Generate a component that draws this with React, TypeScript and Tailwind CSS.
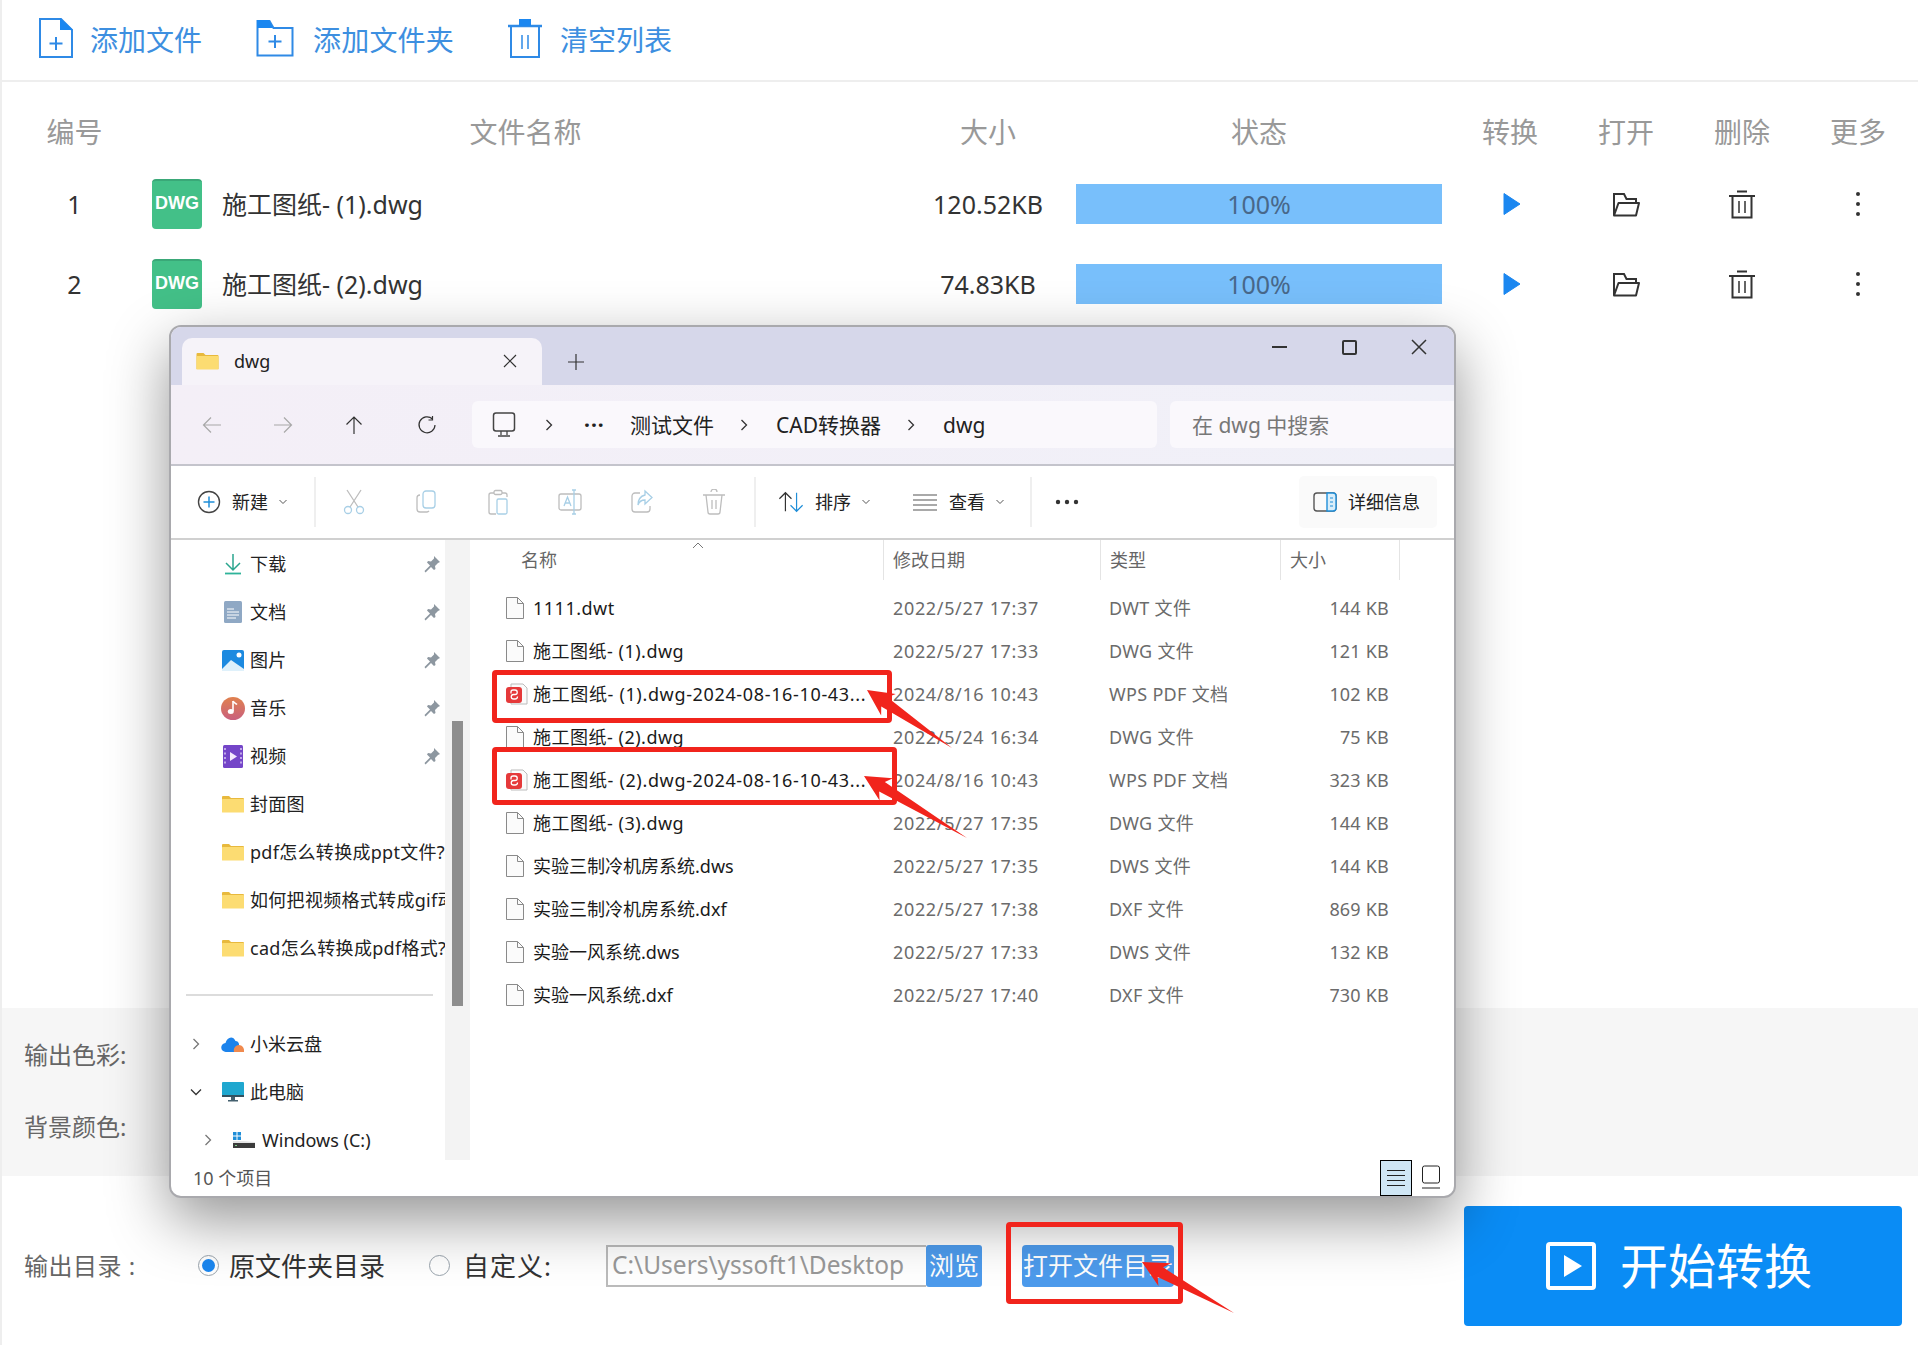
import React from "react";

const FONT = "font-['Noto_Sans','Noto_Sans_CJK_SC',sans-serif]";

function AddFileIcon() {
  return (
    <svg width="36" height="42" viewBox="0 0 36 42" fill="none" className="shrink-0 mb-[4px]">
      <path d="M2 2h21l11 11v27H2z" stroke="#2f8ae6" strokeWidth="2" />
      <path d="M22 1l13 12H22z" fill="#1b87f0" />
      <path d="M18 20v13M11.5 26.5h13" stroke="#2f8ae6" strokeWidth="2" />
    </svg>
  );
}
function AddFolderIcon() {
  return (
    <svg width="38" height="38" viewBox="0 0 38 38" fill="none" className="shrink-0 mb-[4px]">
      <path d="M1.5 2h12l4 7h19v27.5h-35z" stroke="#2f8ae6" strokeWidth="2" />
      <path d="M1 1h12l4 8H1z" fill="#1b87f0" />
      <path d="M19 16v13M12.5 22.500h13" stroke="#2f8ae6" strokeWidth="2" />
    </svg>
  );
}
function ClearIcon() {
  return (
    <svg width="36" height="40" viewBox="0 0 36 40" fill="none" className="shrink-0 mb-[4px]">
      <path d="M1 8h34" stroke="#2f8ae6" strokeWidth="2.500" />
      <rect x="12" y="1" width="12" height="7" fill="#1b87f0" />
      <path d="M4 9v30h28V9" stroke="#2f8ae6" strokeWidth="2" />
      <path d="M15 17v14M21 17v14" stroke="#2f8ae6" strokeWidth="1.500" />
    </svg>
  );
}
function Play() {
  return (
    <svg width="18" height="24" viewBox="0 0 18 24" className="ml-[4px]">
      <path d="M1 1.500l16 10.500L1 22.500z" fill="#1b87f0" stroke="#1b87f0" strokeLinejoin="round" />
    </svg>
  );
}
function OpenFolder() {
  return (
    <svg width="28" height="25" viewBox="0 0 28 25" fill="none">
      <path d="M2 23V2h10l2.500 5H24v4" stroke="#333" strokeWidth="2" />
      <path d="M6.500 11H27l-3 12.500H2z" stroke="#333" strokeWidth="2" strokeLinejoin="round" />
    </svg>
  );
}
function Trash() {
  return (
    <svg width="28" height="29" viewBox="0 0 28 29" fill="none">
      <path d="M1 6h26M9 1.500h10" stroke="#333" strokeWidth="2" />
      <path d="M4.500 6.500V27.500h19V6.500" stroke="#333" strokeWidth="2" />
      <path d="M11 11v12M17 11v12" stroke="#333" strokeWidth="1.500" />
    </svg>
  );
}
function Dots() {
  return (
    <svg width="6" height="26" viewBox="0 0 6 26">
      <circle cx="3" cy="3" r="2" fill="#333" />
      <circle cx="3" cy="13" r="2" fill="#333" />
      <circle cx="3" cy="23" r="2" fill="#333" />
    </svg>
  );
}
function DwgBadge() {
  return (
    <div className="w-[50px] h-[50px] rounded-[4px] bg-[#43c088] border-t-2 border-[#3aa878] pb-[4px] flex items-center justify-center text-white text-[18px] font-semibold font-['Liberation_Sans',sans-serif]">
      DWG
    </div>
  );
}
function Folder({ w = 22, h = 18 }: { w?: number; h?: number }) {
  return (
    <svg width={w} height={h} viewBox="0 0 22 18" className="shrink-0">
      <path d="M0 2a1 1 0 011-1h6l2 2h12a1 1 0 011 1v13H0z" fill="#e8b93d" />
      <rect x="0" y="4" width="22" height="13.500" rx="0.500" fill="#fcdc72" />
    </svg>
  );
}
function FileIcon() {
  return (
    <svg width="18" height="22" viewBox="0 0 18 22" fill="none" className="shrink-0">
      <path d="M.5.500h11l6 6v15H.5z" fill="#fbfbfb" stroke="#8a8a8a" />
      <path d="M11.500.500v6h6" stroke="#8a8a8a" />
    </svg>
  );
}
function PdfIcon() {
  return (
    <svg width="22" height="22" viewBox="0 0 22 22" fill="none" className="shrink-0">
      <path d="M5 1h12l4 4v16H5z" fill="#fbfbfb" stroke="#bbb" />
      <rect x="0" y="4" width="16" height="16" rx="3" fill="#e5393a" />
      <path d="M5 10.500V9a2 2 0 012-2h2a2 2 0 010 4.500H7.500a2 2 0 000 4.500H9a2.500 2.500 0 002.500-2.500" stroke="#fff" strokeWidth="1.300" />
    </svg>
  );
}
function Chevron({ c = "#555" }: { c?: string }) {
  return (
    <svg width="10" height="6" viewBox="0 0 10 6" fill="none" className="shrink-0">
      <path d="M1.500 1l3.500 3.500L8.500 1" stroke={c} />
    </svg>
  );
}
function RightChevron({ c = "#333" }: { c?: string }) {
  return (
    <svg width="10" height="14" viewBox="0 0 10 14" fill="none" className="shrink-0">
      <path d="M2.500 2l5 5-5 5" stroke={c} strokeWidth="1.300" />
    </svg>
  );
}
function Pin() {
  return (
    <svg width="18" height="18" viewBox="0 0 18 18" className="shrink-0">
      <path d="M11 1l6 6-2 1-3 3 .5 3-1.500 1-3-3-5.500 5.500L1.500 16 7 10.500l-3-3 1-1.500 3 .5 3-3z" fill="#8d97a0" />
    </svg>
  );
}
function NavIcon({ name, c }: { name: string; c: string }) {
  const d: Record<string, string> = {
    back: "M19 10H2M9 2.500L1.500 10 9 17.500",
    fwd: "M1 10h17M11 2.500L18.500 10 11 17.500",
    up: "M10 19V2M2.500 9.500L10 2l7.500 7.500",
    refresh: "M15.500 4A8 8 0 1018 10M15.500 1v4h-4",
  };
  return (
    <svg width="20" height="20" viewBox="0 0 20 20" fill="none">
      <path d={d[name]} stroke={c} strokeWidth="1.200" />
    </svg>
  );
}
function CmdIcon({ name }: { name: string }) {
  const grey = "#bdbdbd";
  const blue = "#a8cfe6";
  return (
    <svg width="24" height="26" viewBox="0 0 24 26" fill="none" className="shrink-0">
      {name === "cut" && (
        <>
          <path d="M5 1l11 17M19 1L8 18" stroke={grey} strokeWidth="1.300" />
          <circle cx="6" cy="21" r="3.500" stroke={blue} strokeWidth="1.300" />
          <circle cx="18" cy="21" r="3.500" stroke={blue} strokeWidth="1.300" />
        </>
      )}
      {name === "copy" && (
        <>
          <rect x="9" y="2" width="12" height="17" rx="3" stroke={blue} strokeWidth="1.300" />
          <path d="M6 6a3 3 0 00-3 3v11a3 3 0 003 3h7a3 3 0 002-1" stroke={grey} strokeWidth="1.300" />
        </>
      )}
      {name === "paste" && (
        <>
          <path d="M8 4H5a2 2 0 00-2 2v17a2 2 0 002 2h5M16 4h3a2 2 0 012 2v2" stroke={grey} strokeWidth="1.300" />
          <rect x="8" y="1.500" width="8" height="4" rx="1.500" stroke={grey} strokeWidth="1.300" />
          <rect x="11" y="10" width="10" height="15" rx="1.500" stroke={blue} strokeWidth="1.300" />
        </>
      )}
      {name === "rename" && (
        <>
          <rect x="1" y="5" width="22" height="16" rx="2" stroke={grey} strokeWidth="1.300" />
          <path d="M6 17l3.500-9L13 17M7.500 14h4" stroke={blue} strokeWidth="1.300" />
          <path d="M14 1h4M14 25h4M16 1v24" stroke={blue} strokeWidth="1.300" />
        </>
      )}
      {name === "share" && (
        <>
          <path d="M10 4H5a3 3 0 00-3 3v13a3 3 0 003 3h12a3 3 0 003-3v-3" stroke={grey} strokeWidth="1.300" />
          <path d="M15 2l7 6.500-7 6.500v-4c-4 0-6 2-7 5 0-6 3-9 7-10z" stroke={blue} strokeWidth="1.300" />
        </>
      )}
      {name === "trash" && (
        <>
          <path d="M1 6h22M9 3a3 3 0 016 0" stroke={grey} strokeWidth="1.300" />
          <path d="M4 6l2 17a2 2 0 002 2h8a2 2 0 002-2l2-17M10 11v9M14 11v9" stroke={grey} strokeWidth="1.300" />
        </>
      )}
    </svg>
  );
}
function SideIcon({ name }: { name: string }) {
  if (name === "folder") return <Folder />;
  const box = "shrink-0";
  if (name === "download")
    return (
      <svg width="20" height="22" viewBox="0 0 20 22" fill="none" className={box}>
        <path d="M10 1v15M3 10l7 7 7-7" stroke="#2aa58e" strokeWidth="1.500" />
        <path d="M2 20.500h16" stroke="#2fb39a" strokeWidth="1.800" />
      </svg>
    );
  if (name === "doc")
    return (
      <svg width="18" height="22" viewBox="0 0 18 22" className={box}>
        <rect width="18" height="22" rx="1.500" fill="#8fa8c4" />
        <path d="M3 8h7M3 11h12M3 14h12M3 17h9" stroke="#fff" strokeWidth="1" />
      </svg>
    );
  if (name === "pic")
    return (
      <svg width="22" height="21" viewBox="0 0 22 21" className={box}>
        <rect width="22" height="21" rx="2" fill="#1c8ae0" />
        <circle cx="17" cy="5" r="2.500" fill="#fff" />
        <path d="M0 19l9-9 13 9v2H0z" fill="#dff1fb" />
      </svg>
    );
  if (name === "music")
    return (
      <svg width="24" height="23" viewBox="0 0 24 23" className={box}>
        <defs>
          <linearGradient id="mg" x1="0" y1="0" x2="0" y2="1">
            <stop offset="0" stopColor="#e0814e" />
            <stop offset="1" stopColor="#c9607e" />
          </linearGradient>
        </defs>
        <ellipse cx="12" cy="11.500" rx="12" ry="11.500" fill="url(#mg)" />
        <path d="M12 4v10" stroke="#fff" strokeWidth="1.600" />
        <ellipse cx="9.800" cy="14.500" rx="3" ry="2.500" fill="#fff" />
        <path d="M12 4c1 2 3 2.500 4 3.500" stroke="#fff" strokeWidth="1.600" fill="none" />
      </svg>
    );
  if (name === "video")
    return (
      <svg width="20" height="23" viewBox="0 0 20 23" className={box}>
        <rect width="20" height="23" rx="1.500" fill="#7445c8" />
        <path d="M7 7l7 4.500-7 4.500z" fill="#f4e9fd" />
        <path d="M2 3v17" stroke="#c9b3ee" strokeWidth="1.800" strokeDasharray="2 2.500" />
        <path d="M18 3v17" stroke="#c9b3ee" strokeWidth="1.800" strokeDasharray="2 2.500" />
      </svg>
    );
  if (name === "cloud")
    return (
      <svg width="24" height="18" viewBox="0 0 24 18" className={box}>
        <path d="M5 17a4.500 4.500 0 01-.5-9C6 2 12 0 14.500 6c2 0 3 1 3.500 3v8z" fill="#1c83ec" />
        <path d="M13 17c-1-3 1-7 5-7 3 0 5 3 5 5v2z" fill="#f08a4e" />
      </svg>
    );
  if (name === "pc")
    return (
      <svg width="22" height="20" viewBox="0 0 22 20" className={box}>
        <rect width="22" height="15" rx="1" fill="#1fa7cf" />
        <rect y="13" width="22" height="2" fill="#33515f" />
        <path d="M9 15h4v3h3v1.500H6V18h3z" fill="#44606e" />
      </svg>
    );
  return (
    <svg width="22" height="16" viewBox="0 0 22 16" className={box}>
      <rect x="0" width="3.500" height="3.500" fill="#1f8ed8" />
      <rect x="4.500" width="3.500" height="3.500" fill="#1f8ed8" />
      <rect x="0" y="4.500" width="3.500" height="3.500" fill="#1f8ed8" />
      <rect x="4.500" y="4.500" width="3.500" height="3.500" fill="#1f8ed8" />
      <path d="M0 9h10l12 1v6H0z" fill="#e5e5e5" />
      <rect y="11" width="22" height="5" fill="#3c3c3c" />
      <rect x="2" y="13" width="2" height="1" fill="#7fd08a" />
    </svg>
  );
}

function Arrow({ tip, tail, head = 26, wide = 13, neck = 5.5 }: { tip: [number, number]; tail: [number, number]; head?: number; wide?: number; neck?: number }) {
  const dx = tail[0] - tip[0];
  const dy = tail[1] - tip[1];
  const l = Math.hypot(dx, dy);
  const u = [dx / l, dy / l];
  const n = [-u[1], u[0]];
  const p = (a: number, b: number) => `${tip[0] + u[0] * a + n[0] * b},${tip[1] + u[1] * a + n[1] * b}`;
  const points = [p(0, 0), p(head, wide), p(head - 5, neck), p(l, 0), p(head - 5, -neck), p(head, -wide)].join(" ");
  return <polygon points={points} fill="#f1241c" />;
}

const sideRows = [
  { icon: "download", label: "下载", pin: true },
  { icon: "doc", label: "文档", pin: true },
  { icon: "pic", label: "图片", pin: true },
  { icon: "music", label: "音乐", pin: true },
  { icon: "video", label: "视频", pin: true },
  { icon: "folder", label: "封面图" },
  { icon: "folder", label: "pdf怎么转换成ppt文件?" },
  { icon: "folder", label: "如何把视频格式转成gif动图?" },
  { icon: "folder", label: "cad怎么转换成pdf格式?" },
];

const files = [
  ["1111.dwt", "2022/5/27 17:37", "DWT 文件", "144 KB", "f"],
  ["施工图纸- (1).dwg", "2022/5/27 17:33", "DWG 文件", "121 KB", "f"],
  ["施工图纸- (1).dwg-2024-08-16-10-43...", "2024/8/16 10:43", "WPS PDF 文档", "102 KB", "p"],
  ["施工图纸- (2).dwg", "2022/5/24 16:34", "DWG 文件", "75 KB", "f"],
  ["施工图纸- (2).dwg-2024-08-16-10-43...", "2024/8/16 10:43", "WPS PDF 文档", "323 KB", "p"],
  ["施工图纸- (3).dwg", "2022/5/27 17:35", "DWG 文件", "144 KB", "f"],
  ["实验三制冷机房系统.dws", "2022/5/27 17:35", "DWS 文件", "144 KB", "c"],
  ["实验三制冷机房系统.dxf", "2022/5/27 17:38", "DXF 文件", "869 KB", "c"],
  ["实验一风系统.dws", "2022/5/27 17:33", "DWS 文件", "132 KB", "c"],
  ["实验一风系统.dxf", "2022/5/27 17:40", "DXF 文件", "730 KB", "c"],
];

const COLS = "grid grid-cols-[145px_757px_168px_380px_116px_116px_116px_116px]";

export default function App() {
  return (
    <div className={`relative w-[1918px] h-[1345px] overflow-hidden bg-white border-l-2 border-[#eeeeee] flex flex-col ${FONT}`}>
      {/* toolbar */}
      <div className="h-[82px] border-b-2 border-[#eeeeee] flex items-center pl-[36px] text-[28px] leading-[36px] text-[#3d8fe0] shrink-0">
        <AddFileIcon />
        <span className="ml-[16px]">添加文件</span>
        <div className="ml-[54px]"><AddFolderIcon /></div>
        <span className="ml-[19px] tracking-[0.2px]">添加文件夹</span>
        <div className="ml-[53px]"><ClearIcon /></div>
        <span className="ml-[17px]">清空列表</span>
      </div>

      {/* table */}
      <div className={`${COLS} h-[82px] pt-[18px] items-center text-center text-[28px] leading-[36px] text-[#999999] shrink-0`}>
        <div>编号</div>
        <div>文件名称</div>
        <div>大小</div>
        <div className="pl-[4px] w-[370px]">状态</div>
        <div>转换</div>
        <div>打开</div>
        <div>删除</div>
        <div>更多</div>
      </div>
      {[
        ["1", "施工图纸- (1).dwg", "120.52KB"],
        ["2", "施工图纸- (2).dwg", "74.83KB"],
      ].map(([n, name, size]) => (
        <div key={n} className={`${COLS} h-[80px] items-center text-[25px] leading-[34px] text-[#333333] shrink-0`}>
          <div className="text-center">{n}</div>
          <div className="flex items-center pl-[5px]">
            <DwgBadge />
            <span className="ml-[20px]">{name}</span>
          </div>
          <div className="text-center">{size}</div>
          <div className="ml-[4px] w-[366px] h-[40px] bg-[#78bffb] flex items-center justify-center text-[#48688a]">100%</div>
          <div className="flex justify-center"><Play /></div>
          <div className="flex justify-center"><OpenFolder /></div>
          <div className="flex justify-center"><Trash /></div>
          <div className="flex justify-center"><Dots /></div>
        </div>
      ))}

      <div className="flex-1" />

      {/* colour settings */}
      <div className="h-[168px] bg-[#f6f6f6] flex flex-col justify-center gap-[36px] pb-[2px] pl-[22px] text-[24px] leading-[36px] text-[#666666] shrink-0">
        <div>输出色彩:</div>
        <div>背景颜色:</div>
      </div>

      {/* output row */}
      <div className="h-[169px] pt-[10px] pl-[22px] pr-[16px] flex items-center shrink-0 whitespace-nowrap">
        <span className="w-[113px] shrink-0 text-[24px] leading-[36px] text-[#666666] tracking-[0.5px]">输出目录 :</span>
        <span className="ml-[61px] w-[21px] h-[21px] rounded-full border border-[#9aa4ad] flex items-center justify-center bg-white shrink-0">
          <span className="w-[13px] h-[13px] rounded-full bg-[#1b87f0]" />
        </span>
        <span className="ml-[10px] w-[156px] shrink-0 text-[26px] leading-[36px] text-[#333333]">原文件夹目录</span>
        <span className="ml-[44px] w-[21px] h-[21px] rounded-full border border-[#9aa4ad] bg-white shrink-0" />
        <span className="ml-[13px] w-[88px] shrink-0 text-[26px] leading-[36px] text-[#333333] tracking-[1px]">自定义:</span>
        <div className="ml-[55px] w-[320px] shrink-0 h-[42px] border-2 border-[#bbbbbb] border-r-0 pl-[4px] flex items-center text-[24.5px] text-[#999999] overflow-hidden">
          {"C:\\Users\\yssoft1\\Desktop"}
        </div>
        <div className="w-[56px] h-[42px] rounded-[3px] bg-[#4d9bec] text-white text-[25px] flex items-center justify-center shrink-0">浏览</div>
        <div className="ml-[40px] w-[152px] h-[42px] rounded-[4px] bg-[#4d9bec] text-white text-[25px] flex items-center justify-center shrink-0">打开文件目录</div>
        <div className="ml-auto w-[438px] h-[120px] rounded-[4px] bg-[#0a8cf5] text-white flex items-center justify-center pr-[8px] shrink-0">
          <svg width="50" height="48" viewBox="0 0 50 48" fill="none" className="shrink-0">
            <rect x="2" y="2" width="46" height="44" rx="2" stroke="#fff" strokeWidth="4" />
            <path d="M18 13l18 11-18 11z" fill="#fff" />
          </svg>
          <span className="ml-[24px] text-[48px] leading-[60px]">开始转换</span>
        </div>
      </div>

      {/* Explorer window */}
      <div className="absolute left-[167px] top-[325px] w-[1287px] h-[873px] rounded-[12px] border-2 border-[#a9a9ad] bg-white overflow-hidden shadow-[0_22px_60px_rgba(0,0,0,0.42)] flex flex-col">
        {/* title bar */}
        <div className="h-[58px] bg-[#d6d7ea] flex items-end pl-[11px] shrink-0">
          <div className="w-[360px] h-[47px] rounded-t-[10px] bg-[#f6f3f9] flex items-center pl-[14px] pb-[2px]">
            <Folder w={23} h={18} />
            <span className="ml-[15px] text-[18px] leading-[24px] text-[#222]">dwg</span>
            <svg width="14" height="14" viewBox="0 0 14 14" className="ml-[233px]" fill="none">
              <path d="M1 1l12 12M13 1L1 13" stroke="#333" strokeWidth="1.200" />
            </svg>
          </div>
          <svg width="16" height="16" viewBox="0 0 16 16" className="ml-[26px] mb-[15px]" fill="none">
            <path d="M8 0v16M0 8h16" stroke="#333" strokeWidth="1.200" />
          </svg>
          <div className="ml-auto self-start flex h-[40px]">
            <div className="w-[70px] flex items-center justify-center">
              <div className="w-[15px] h-[1.500px] bg-[#333]" />
            </div>
            <div className="w-[70px] flex items-center justify-center">
              <div className="w-[15px] h-[15px] rounded-[2px] border-2 border-[#333]" />
            </div>
            <div className="w-[70px] flex items-center justify-center">
              <svg width="16" height="16" viewBox="0 0 16 16" fill="none">
                <path d="M1 1l14 14M15 1L1 15" stroke="#333" strokeWidth="1.500" />
              </svg>
            </div>
          </div>
        </div>

        {/* address row */}
        <div className="h-[81px] border-b-2 border-[#c4c4cc] bg-gradient-to-r from-[#f4eff7] to-[#f0f0f8] flex items-center pl-[5px] shrink-0 text-[21px] leading-[28px] text-[#222]">
          <div className="w-[71px] flex justify-center"><NavIcon name="back" c="#a8a8a8" /></div>
          <div className="w-[71px] flex justify-center"><NavIcon name="fwd" c="#a8a8a8" /></div>
          <div className="w-[71px] flex justify-center"><NavIcon name="up" c="#333" /></div>
          <div className="w-[71px] pl-[4px] flex justify-center"><NavIcon name="refresh" c="#333" /></div>
          <div className="ml-[12px] w-[685px] h-[47px] pt-[1px] rounded-[6px] bg-[#faf8fc] flex items-center whitespace-nowrap">
            <svg width="24" height="26" viewBox="0 0 24 26" className="ml-[20px] shrink-0" fill="none">
              <rect x="1.500" y="1" width="21" height="18" rx="2.500" stroke="#444" strokeWidth="1.500" />
              <path d="M9 19v4M15 19v4M6 24h12" stroke="#444" strokeWidth="1.300" />
            </svg>
            <div className="ml-[28px]"><RightChevron /></div>
            <span className="ml-[30px] w-[18px] text-center leading-[10px] font-bold tracking-[1px] shrink-0">···</span>
            <span className="ml-[28px] w-[84px] shrink-0">测试文件</span>
            <div className="ml-[25px]"><RightChevron /></div>
            <span className="ml-[27px] w-[105px] shrink-0">CAD转换器</span>
            <div className="ml-[25px]"><RightChevron /></div>
            <span className="ml-[27px]">dwg</span>
          </div>
          <div className="ml-[13px] flex-1 h-[47px] pt-[1px] rounded-l-[6px] bg-[#faf8fc] flex items-center pl-[22px] text-[#777777] whitespace-nowrap">
            在 dwg 中搜索
          </div>
        </div>

        {/* command bar */}
        <div className="h-[74px] border-b-2 border-[#d0d0d0] bg-white flex items-center text-[18px] leading-[24px] text-[#222] shrink-0 whitespace-nowrap">
          <svg width="24" height="24" viewBox="0 0 24 24" className="ml-[26px] shrink-0" fill="none">
            <circle cx="12" cy="12" r="10.500" stroke="#444" strokeWidth="1.400" />
            <path d="M12 6.500v11M6.500 12h11" stroke="#1f8ed8" strokeWidth="1.500" />
          </svg>
          <span className="ml-[11px] w-[38px]">新建</span>
          <div className="ml-[8px]"><Chevron /></div>
          <div className="ml-[26px] w-[2px] h-[50px] bg-[#efefef] shrink-0" />
          <div className="ml-[2px] flex">
            {["cut", "copy", "paste", "rename", "share", "trash"].map((k) => (
              <div key={k} className="w-[72px] flex justify-center"><CmdIcon name={k} /></div>
            ))}
          </div>
          <div className="ml-[4px] w-[2px] h-[50px] bg-[#efefef] shrink-0" />
          <svg width="26" height="24" viewBox="0 0 28 24" className="ml-[22px] shrink-0" fill="none">
            <path d="M8 22V2M1.500 8.500L8 2l6.500 6.500" stroke="#333" strokeWidth="1.300" />
            <path d="M20 2v20M13.500 15.500L20 22l6.500-6.500" stroke="#1f8ed8" strokeWidth="1.300" />
          </svg>
          <span className="ml-[11px] w-[38px]">排序</span>
          <div className="ml-[8px]"><Chevron /></div>
          <svg width="24" height="18" viewBox="0 0 24 18" className="ml-[42px] shrink-0" fill="none">
            <path d="M0 2h24M0 7h24M0 12h24M0 17h24" stroke="#555" strokeWidth="1.200" />
          </svg>
          <span className="ml-[12px] w-[38px]">查看</span>
          <div className="ml-[8px]"><Chevron /></div>
          <div className="ml-[25px] w-[2px] h-[50px] bg-[#efefef] shrink-0" />
          <svg width="24" height="6" viewBox="0 0 24 6" className="ml-[23px] shrink-0">
            <circle cx="3" cy="3" r="2.200" fill="#333" />
            <circle cx="12" cy="3" r="2.200" fill="#333" />
            <circle cx="21" cy="3" r="2.200" fill="#333" />
          </svg>
          <div className="ml-auto mr-[17px] w-[138px] h-[52px] rounded-[5px] bg-[#fafafa] flex items-center pl-[14px]">
            <svg width="24" height="20" viewBox="0 0 24 20" fill="none" className="shrink-0">
              <rect x="1" y="1" width="22" height="18" rx="3" stroke="#555" strokeWidth="1.400" />
              <path d="M14 1h6a3 3 0 013 3v12a3 3 0 01-3 3h-6z" stroke="#1f8ed8" strokeWidth="1.400" fill="#d9eefa" />
              <path d="M17 6h3M17 10h3M17 14h3" stroke="#1f8ed8" />
            </svg>
            <span className="ml-[11px]">详细信息</span>
          </div>
        </div>

        {/* main */}
        <div className="flex-1 min-h-0 flex">
          <div className="w-[274px] shrink-0 overflow-hidden text-[18px] leading-[24px] text-[#222]">
            {sideRows.map((r) => (
              <div key={r.label} className="h-[48.05px] flex items-center">
                <div className="ml-[48px] w-[28px] flex justify-center shrink-0"><SideIcon name={r.icon} /></div>
                <span className="ml-[3px] flex-1 min-w-0 overflow-hidden whitespace-nowrap tracking-[0.3px]">{r.label}</span>
                {r.pin && <div className="mr-[4px]"><Pin /></div>}
              </div>
            ))}
            <div className="h-[48px] pt-[22px]">
              <div className="ml-[15px] w-[247px] h-[2px] bg-[#dcdcdc]" />
            </div>
            <div className="h-[48px] flex items-center">
              <div className="ml-[20px] w-[10px]"><RightChevron c="#777" /></div>
              <div className="ml-[18px] w-[28px] flex justify-center"><SideIcon name="cloud" /></div>
              <span className="ml-[3px]">小米云盘</span>
            </div>
            <div className="h-[48px] flex items-center">
              <div className="ml-[20px] w-[10px] rotate-90"><RightChevron c="#333" /></div>
              <div className="ml-[18px] w-[28px] flex justify-center"><SideIcon name="pc" /></div>
              <span className="ml-[3px]">此电脑</span>
            </div>
            <div className="h-[48px] flex items-center">
              <div className="ml-[32px] w-[10px]"><RightChevron c="#777" /></div>
              <div className="ml-[20px] w-[22px]"><SideIcon name="drive" /></div>
              <span className="ml-[7px]">Windows (C:)</span>
            </div>
          </div>
          <div className="w-[25px] shrink-0 bg-[#f3f3f3] px-[7px] pt-[181px]">
            <div className="w-[11px] h-[285px] bg-[#8e8e8e]" />
          </div>
          <div className="flex-1 min-w-0 text-[18px] leading-[24px] whitespace-nowrap">
            <div className="relative h-[46px] pb-[6px] flex items-stretch text-[#666666]">
              <svg width="12" height="7" viewBox="0 0 12 7" fill="none" className="absolute left-[222px] top-[2px]">
                <path d="M1 6l5-5 5 5" stroke="#777" />
              </svg>
              <div className="w-[413px] pl-[51px] flex items-center">名称</div>
              <div className="w-[217px] pl-[9px] border-l border-[#e4e4e4] flex items-center">修改日期</div>
              <div className="w-[180px] pl-[9px] border-l border-[#e4e4e4] flex items-center">类型</div>
              <div className="w-[120px] pl-[9px] border-l border-[#e4e4e4] border-r flex items-center">大小</div>
            </div>
            {files.map(([name, date, type, size, kind]) => (
              <div key={name + date} className="h-[43px] flex items-center pl-[36px]">
                <div className="w-[27px] shrink-0">{kind === "p" ? <PdfIcon /> : <FileIcon />}</div>
                <div
                  className={
                    kind === "p"
                      ? "w-[360px] shrink-0 text-[#1a1a1a] tracking-[0.65px]"
                      : kind === "c"
                        ? "w-[360px] shrink-0 text-[#1a1a1a]"
                        : "w-[360px] shrink-0 text-[#1a1a1a] tracking-[0.5px]"
                  }
                >
                  {name}
                </div>
                <div className="w-[216px] shrink-0 text-[#6b6b6b] tracking-[0.65px]">{date}</div>
                <div className="w-[171px] shrink-0 text-[#6b6b6b] tracking-[0.3px]">{type}</div>
                <div className="w-[109px] shrink-0 text-right text-[#6b6b6b] tracking-[0.2px]">{size}</div>
              </div>
            ))}
          </div>
        </div>

        {/* status bar */}
        <div className="h-[36px] flex items-center pl-[22px] text-[18px] leading-[24px] text-[#555] shrink-0">
          <span>10 个项目</span>
          <div className="ml-auto mr-[13px] flex items-center">
            <div className="w-[32px] h-[36px] border border-black bg-[#cfe6f5] flex items-center justify-center">
              <svg width="20" height="18" viewBox="0 0 20 18" fill="none">
                <path d="M1 1.500h18M1 6.500h18M1 11.500h18M1 16.500h18" stroke="#222" />
              </svg>
            </div>
            <svg width="20" height="26" viewBox="0 0 20 26" fill="none" className="ml-[9px]">
              <rect x="1.500" y="1" width="17" height="17" rx="2" stroke="#222" />
              <path d="M1 23h18" stroke="#222" />
            </svg>
          </div>
        </div>
      </div>

      {/* red annotations */}
      <div className="absolute left-[490px] top-[670px] w-[400px] h-[53px] border-[5px] border-[#f1241c] rounded-[4px]" />
      <div className="absolute left-[490px] top-[747px] w-[405px] h-[58px] border-[5px] border-[#f1241c] rounded-[4px]" />
      <div className="absolute left-[1004px] top-[1222px] w-[177px] h-[82px] border-[5px] border-[#f1241c] rounded-[4px]" />
      <svg width="1918" height="1345" viewBox="0 0 1918 1345" className="absolute left-[-2px] top-0 pointer-events-none">
        <Arrow tip={[867, 690]} tail={[952, 748]} />
        <Arrow tip={[864, 776]} tail={[967, 838]} />
        <Arrow tip={[1142, 1262]} tail={[1234, 1313]} />
      </svg>
    </div>
  );
}
